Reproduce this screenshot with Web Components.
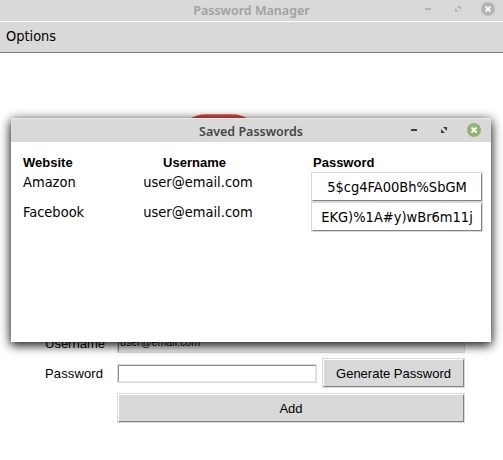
<!DOCTYPE html>
<html lang="en"><head><meta charset="utf-8"><title>Password Manager</title>
<style>
html,body{margin:0;width:503px;height:460px;overflow:hidden;background:#fff}
body{font:13px/15px "Liberation Sans",sans-serif;color:#000}
</style></head><body>
<password-app></password-app>
<script>
const define=(name,html)=>customElements.define(name,class extends HTMLElement{
  constructor(){super();this.attachShadow({mode:'open'}).innerHTML=html;}
});

define('title-bar',`<style>
:host{display:grid;grid-template-columns:1fr auto 1fr;box-sizing:border-box;background:#d9d9d9;align-items:start;
 font:600 12.5px/20px "Noto Sans",sans-serif;color:var(--title,#464646)}
.t{grid-column:2;white-space:nowrap;padding-top:var(--drop,3px)}
svg{display:block;justify-self:end;color:var(--glyph,#3c3c3c);margin-top:var(--icons,3px)}
</style><span class="t"><slot></slot></span>
<svg width="80" height="16" viewBox="0 0 80 16">
<path d="M2 7h6v2H2z" fill="currentColor"/>
<path d="M34 5H38v4zM32 7l4 4H32z" fill="currentColor"/>
<circle cx="65" cy="8" r="7" fill="var(--close,#92b372)"/>
<path d="M62.500 5.500l5 5m0-5l-5 5" stroke="#fff" stroke-width="1.900"/></svg>`);

define('raised-button',`<style>
:host{display:block;box-sizing:border-box;height:30px;border:1px solid #d9d9d9}
button{display:block;width:100%;height:100%;box-sizing:border-box;margin:0;padding:0;border:1px solid;
 border-color:#fff #828282 #828282 #fff;background:var(--face,#d9d9d9);font:inherit;letter-spacing:inherit;color:#000;text-align:center;white-space:nowrap}
</style><button><slot></slot></button>`);

define('text-entry',`<style>
:host{display:block;box-sizing:border-box;border:1px solid #d9d9d9}
div{box-sizing:border-box;height:100%;border:1px solid;border-color:#8c8c8c #e6e6e6 #e6e6e6 #8c8c8c;
 background:var(--face,#fff);font-size:10.67px;line-height:13px;padding-left:1px;white-space:nowrap}
</style><div><slot></slot></div>`);

define('menu-bar',`<style>
:host{display:block;box-sizing:border-box;height:32px;background:#d9d9d9;border-top:1px solid #fff;border-bottom:1px solid #828282;
 padding:6px 6px 0;font:14.45px/16px "DejaVu Sans Condensed","DejaVu Sans",sans-serif}
</style><slot></slot>`);

define('entry-form',`<style>
:host{display:grid;grid-template-columns:67px 200px 143px;column-gap:5px;grid-template-rows:30px 30px 35px;
 align-items:center;width:420px}
.wide{grid-column:2/4;--face:#ececec}
.end{grid-column:2/4;margin-top:5px}
.pw{letter-spacing:.12px}
text-entry{height:19px}
</style>
<span>Username</span><text-entry class="wide">user@email.com</text-entry>
<span class="pw">Password</span><text-entry></text-entry><raised-button>Generate Password</raised-button>
<raised-button class="end">Add</raised-button>`);

define('saved-dialog',`<style>
:host{display:block;box-sizing:border-box;width:480px;height:224px;background:#fff;border-radius:3px 3px 0 0;
 box-shadow:0 3px 10px rgba(0,0,0,.8),0 2px 14px rgba(0,0,0,.4)}
title-bar{height:24px;border-top:1px solid #ececec;border-radius:3px 3px 0 0;padding:0 2px}
.g{display:grid;grid-template-columns:100px 188px 172px;grid-template-rows:17px 30px 30px;padding:13px 8px 0 12px;
 font:14.5px/16px "DejaVu Sans Condensed","DejaVu Sans",sans-serif}
b{font:bold 13px/15px "Liberation Sans",sans-serif}
.p{padding-left:2px}
.u{width:150px;text-align:center}
b.u{width:143px}
.g>span{padding-top:2px}
raised-button{--face:#fff;width:172px}
</style><title-bar>Saved Passwords</title-bar>
<div class="g"><b>Website</b><b class="u">Username</b><b class="p">Password</b>
<span>Amazon</span><span class="u">user@email.com</span><raised-button>5$cg4FA00Bh%SbGM</raised-button>
<span>Facebook</span><span class="u">user@email.com</span><raised-button>EKG)%1A#y)wBr6m11j</raised-button></div>`);

define('password-app',`<style>
:host{display:block;position:relative;width:503px;height:460px;background:#fff;overflow:hidden}
.main{height:21px;--title:#a0a0a0;--glyph:#b4b4b4;--close:#b4b4b4;--drop:1px;--icons:1px}
.logo{position:absolute;left:187px;top:114px}
entry-form{margin:275px 0 0 45px}
saved-dialog{position:absolute;left:11px;top:118px}
</style><title-bar class="main">Password Manager</title-bar><menu-bar>Options</menu-bar>
<svg class="logo" width="64" height="30" viewBox="0 0 64 30"><path d="M1 6Q9 .300 19 .300H45Q55 .300 63 6V30H1z" fill="#dc4a3d"/></svg>
<entry-form></entry-form><saved-dialog></saved-dialog>`);
</script></body></html>
